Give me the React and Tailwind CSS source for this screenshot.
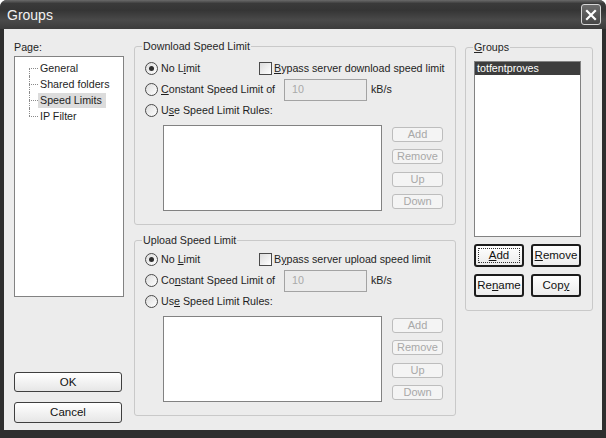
// ─── Groups dialog (Speed Limits page) ───
import React from 'react';

const bodyBg = 'bg-[#ececec]';

function Radio({ checked }) {
  return (
    <span className="w-[13px] h-[13px] shrink-0 rounded-full border border-[#4a4a4a] bg-[linear-gradient(135deg,#dcdcdc,#ffffff)] flex items-center justify-center">
      {checked && <span className="w-[5px] h-[5px] rounded-full bg-[#2e2e2e]" />}
    </span>
  );
}

function Check() {
  return (
    <span className="w-[13px] h-[13px] shrink-0 border border-[#4a4a4a] bg-[linear-gradient(135deg,#dcdcdc,#ffffff)]" />
  );
}

function GroupBox({ label, className, children }) {
  return (
    <div className={`relative border border-[#c9c9c9] rounded-[3px] ${className}`}>
      <span className={`absolute -top-[7px] left-[7px] px-[1px] leading-[13px] text-[#262626] ${bodyBg}`}>
        {label}
      </span>
      {children}
    </div>
  );
}

function DisabledButton({ children }) {
  return (
    <div className="w-[51px] h-[15px] border border-[#bdbdbd] rounded-[3px] bg-[#f4f4f4] text-[#a8a8a8] text-[11px] flex items-center justify-center leading-[13px]">
      {children}
    </div>
  );
}

function ActiveButton({ children, focused }) {
  return (
    <div className="relative w-[50px] h-[23px] border-2 border-[#1c1c1c] rounded-[3px] bg-[linear-gradient(#ffffff,#ececec)] flex items-center justify-center text-[11.5px] text-[#111]">
      {focused && <span className="absolute inset-[2px] border border-dotted border-[#333]" />}
      <span className="relative">{children}</span>
    </div>
  );
}

function DialogButton({ children, h }) {
  return (
    <div className={`w-[108px] ${h} border border-[#3f3f3f] rounded-[3px] bg-[linear-gradient(#ffffff,#e6e6e6)] flex items-center justify-center text-[11.5px] text-[#111]`}>
      {children}
    </div>
  );
}

const U = ({ children }) => <span className="underline underline-offset-[1px]">{children}</span>;

function SpeedBox({ label, noLimit, bypass, constant, rules, className, pt }) {
  return (
    <GroupBox label={label} className={className}>
      <div className={`flex flex-col pl-[10px] ${pt}`}>
        <div className="h-[21px] flex items-center">
          <span className="w-[114px] flex items-center gap-[3px]">
            <Radio checked />
            <span>{noLimit}</span>
          </span>
          <Check />
          <span className="ml-[2px]">{bypass}</span>
        </div>
        <div className="h-[21px] flex items-center">
          <span className="w-[139px] flex items-center gap-[3px]">
            <Radio />
            <span>{constant}</span>
          </span>
          <div className="w-[83px] h-[22px] shrink-0 border border-[#a3a3a3] bg-[#ebebeb] text-[#a9a9a9] pl-[7px] flex items-center">
            10
          </div>
          <span className="ml-[4px]">kB/s</span>
        </div>
        <div className="h-[21px] flex items-center gap-[3px]">
          <Radio />
          <span>{rules}</span>
        </div>
        <div className="mt-[4px] ml-[18px] flex items-start">
          <div className="w-[219px] h-[86px] border border-[#828282] bg-white" />
          <div className="ml-[10px] pt-[2px] flex flex-col gap-[7.3px]">
            <DisabledButton>Add</DisabledButton>
            <DisabledButton>Remove</DisabledButton>
            <DisabledButton>Up</DisabledButton>
            <DisabledButton>Down</DisabledButton>
          </div>
        </div>
      </div>
    </GroupBox>
  );
}

const pages = ['General', 'Shared folders', 'Speed Limits', 'IP Filter'];

function PageTree() {
  return (
    <div className="mt-[2px] w-[110px] h-[241px] border border-[#828282] bg-white pt-[3px]">
      {pages.map((p, i) => {
        const first = i === 0;
        const last = i === pages.length - 1;
        return (
          <div key={p} className="h-[16px] flex items-center">
            <span className="relative ml-[14px] w-[9px] h-[16px] shrink-0">
              <span
                className={`absolute left-0 w-0 border-l border-dotted border-[#8a8a8a] ${
                  first ? 'top-[8px] bottom-0' : last ? 'top-0 h-[8px]' : 'top-0 bottom-0'
                }`}
              />
              <span className="absolute left-0 top-[8px] w-[9px] border-t border-dotted border-[#8a8a8a]" />
            </span>
            <span
              className={`h-[15px] leading-[15px] pl-[2px] pr-[4px] ${
                p === 'Speed Limits' ? 'bg-[#dcdcdc]' : ''
              }`}
            >
              {p}
            </span>
          </div>
        );
      })}
    </div>
  );
}

export default function App() {
  return (
    <div className="w-[606px] h-[438px] flex flex-col bg-[#2e2e2e] rounded-t-[7px] overflow-hidden font-['Liberation_Sans',Arial,sans-serif] text-[10.7px] leading-[13px] text-[#1e1e1e]">
      {/* Title bar */}
      <div className="h-[29px] shrink-0 flex items-center bg-[linear-gradient(#6a6a6a_0%,#3a3a3a_12%,#353535_35%,#4a4a4a_70%,#3c3c3c_100%)]">
        <span className="pl-[7px] text-[14px] leading-[16px] text-[#f2f2f2]">Groups</span>
        <div className="ml-auto mr-[5px] w-[20px] h-[21px] border border-[#d6d6d6] rounded-[3px] bg-[linear-gradient(#6c6c6c,#464646)] flex items-center justify-center">
          <svg width="12" height="12" viewBox="0 0 12 12">
            <path d="M2 2 L10 10 M10 2 L2 10" stroke="#ffffff" strokeWidth="2.2" strokeLinecap="square" />
          </svg>
        </div>
      </div>

      {/* Body */}
      <div className={`flex-1 mx-[4px] mb-[8px] flex ${bodyBg}`}>
        {/* Left: page tree + OK / Cancel */}
        <div className="ml-[10px] w-[110px] flex flex-col pt-[12px] pb-[7px]">
          <span className="leading-[13px]">Page:</span>
          <PageTree />
          <div className="mt-auto flex flex-col gap-[10px]">
            <DialogButton h="h-[20px]">OK</DialogButton>
            <DialogButton h="h-[21px]">Cancel</DialogButton>
          </div>
        </div>

        {/* Middle: speed limits */}
        <div className="ml-[10px] w-[322px] flex flex-col pt-[17px]">
          <SpeedBox
            label="Download Speed Limit"
            className="h-[179px]"
            pt="pt-[11px]"
            noLimit={<>No L<U>i</U>mit</>}
            bypass={<><U>B</U>ypass server download speed limit</>}
            constant={<><U>C</U>onstant Speed Limit of</>}
            rules={<>U<U>s</U>e Speed Limit Rules:</>}
          />
          <SpeedBox
            label="Upload Speed Limit"
            className="mt-[15px] h-[176px]"
            pt="pt-[8px]"
            noLimit={<>No <U>L</U>imit</>}
            bypass={<>B<U>y</U>pass server upload speed limit</>}
            constant={<>Co<U>n</U>stant Speed Limit of</>}
            rules={<>Us<U>e</U> Speed Limit Rules:</>}
          />
        </div>

        {/* Right: groups */}
        <div className="ml-[9px] w-[128px] pt-[18px]">
          <GroupBox label={<><U>G</U>roups</>} className="h-[264px]">
            <div className="pl-[8px] pt-[13px] flex flex-col">
              <div className="w-[107px] h-[176px] border border-[#828282] bg-white">
                <div className="h-[13px] leading-[13px] pl-[2px] bg-[#3d3d3d] text-white">totfentproves</div>
              </div>
              <div className="mt-[7px] flex gap-[7px]">
                <ActiveButton focused><U>A</U>dd</ActiveButton>
                <ActiveButton><U>R</U>emove</ActiveButton>
              </div>
              <div className="mt-[7px] flex gap-[7px]">
                <ActiveButton>Re<U>n</U>ame</ActiveButton>
                <ActiveButton>Cop<U>y</U></ActiveButton>
              </div>
            </div>
          </GroupBox>
        </div>
      </div>
    </div>
  );
}
